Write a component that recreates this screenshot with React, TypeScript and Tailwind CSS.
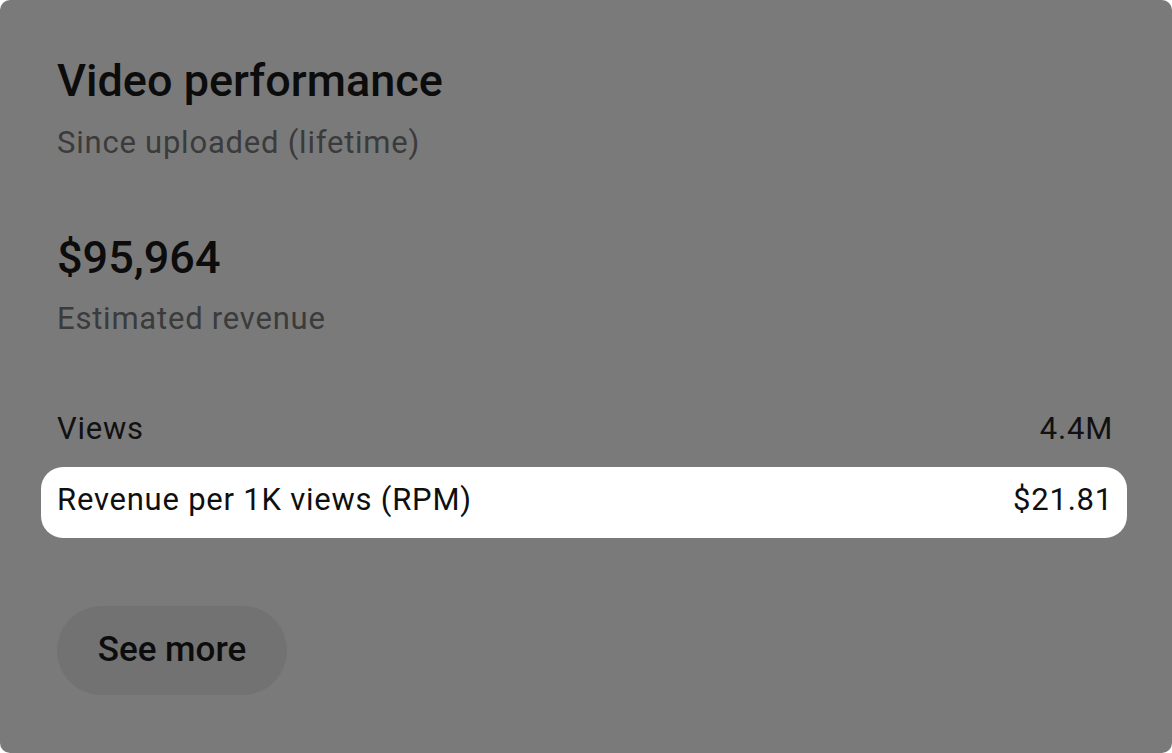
import React from 'react';

const rows = [
  { label: 'Views', value: '4.4M', active: false },
  { label: 'Revenue per 1K views (RPM)', value: '$21.81', active: true },
];

const App = () => {
  return (
    <div className="w-[1172px] h-[753px] bg-white font-['Roboto',sans-serif]">
      <div className="h-full w-full rounded-[10px] bg-[#7a7a7a] pl-[41px] pr-[45px] pt-[58px]">
        {/* Header */}
        <div className="pl-4">
          <h1 className="text-[45px] leading-[45px] font-medium text-[#0c0c0c]">Video performance</h1>
          <p className="mt-[24px] text-[31px] leading-[31px] tracking-[0.025em] text-[#3b3b3b]">Since uploaded (lifetime)</p>
        </div>

        {/* Main metric */}
        <div className="pl-4 mt-[77px]">
          <div className="text-[45px] leading-[45px] font-medium text-[#0c0c0c]">$95,964</div>
          <div className="mt-[23px] text-[31px] leading-[31px] tracking-[0.025em] text-[#3b3b3b]">Estimated revenue</div>
        </div>

        {/* Metric rows */}
        <div className="mt-[62px] flex flex-col">
          {rows.map((row) => (
            <div
              key={row.label}
              className={
                row.active
                  ? 'h-[71px] flex items-center justify-between pl-4 pr-[14px] pb-[6px] rounded-[22px] bg-white text-[31px] leading-[31px] tracking-[0.025em] text-[#0f0f0f]'
                  : 'h-[71px] flex items-center justify-between pl-4 pr-[14px] pb-[6px] rounded-[22px] text-[31px] leading-[31px] tracking-[0.025em] text-[#111111]'
              }
            >
              <span>{row.label}</span>
              <span>{row.value}</span>
            </div>
          ))}
        </div>

        <button className="mt-[68px] ml-4 h-[89px] w-[230px] rounded-full bg-[#727272] text-[35px] font-medium text-[#0c0c0c]">
          See more
        </button>
      </div>
    </div>
  );
};

export default App;
